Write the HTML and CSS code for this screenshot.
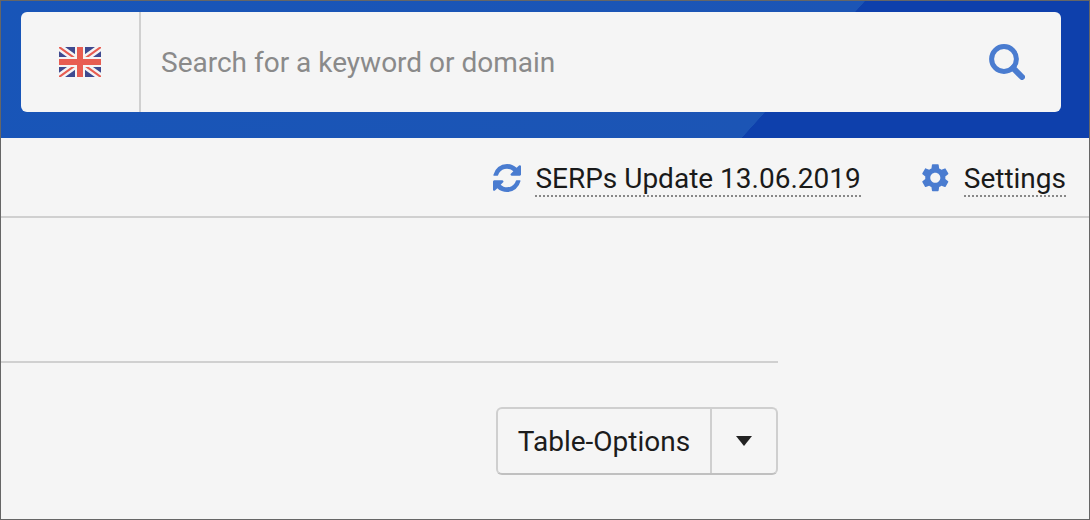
FILE: index.html
```html
<!DOCTYPE html>
<html lang="en">
<head>
<meta charset="utf-8">
<title>SERPs</title>
<link rel="stylesheet" href="styles.css">
</head>
<body>
<div class="frame">
  <header class="hero">
    <div class="searchbox">
      <div class="country">
        <svg class="flag" viewBox="0 0 42 30" width="42" height="30" aria-hidden="true">
          <rect width="42" height="30" rx="1.5" fill="#3f4a90"/>
          <path d="M0 0L42 30M42 0L0 30" stroke="#f5f5f5" stroke-width="7"/>
          <path d="M0 0L42 30M42 0L0 30" stroke="#e85d52" stroke-width="2.2"/>
          <path d="M21 0V30M0 15H42" stroke="#f5f5f5" stroke-width="10"/>
          <path d="M21 0V30M0 15H42" stroke="#e85d52" stroke-width="6"/>
        </svg>
      </div>
      <div class="query">Search for a keyword or domain</div>
      <svg class="search-icon" viewBox="0 0 36 36" width="36" height="36" aria-hidden="true">
        <circle cx="15" cy="15" r="12.4" fill="none" stroke="#4a7cd0" stroke-width="5"/>
        <path d="M24 24L33 33" stroke="#4a7cd0" stroke-width="6" stroke-linecap="round"/>
      </svg>
    </div>
  </header>
  <div class="toolbar">
    <a class="tool">
      <svg class="tool-icon" viewBox="0 0 1536 1536" width="28" height="28" aria-hidden="true">
        <path fill="#4a7cd0" d="M1511 928q0 5-1 7-64 268-268 434.500T764 1536q-146 0-282.500-55T238 1324l-129 129q-19 19-45 19t-45-19-19-45V960q0-26 19-45t45-19h448q26 0 45 19t19 45-19 45L420 1142q71 66 161 102t187 36q134 0 250-65t186-179q11-17 53-117 8-23 30-23h192q13 0 22.500 9.500t9.500 22.500zm25-800v448q0 26-19 45t-45 19h-448q-26 0-45-19t-19-45 19-45l138-138Q969 256 768 256q-134 0-250 65T332 500q-11 17-53 117-8 23-30 23H50q-13 0-22.500-9.500T18 608v-7q65-268 270-434.500T768 0q146 0 284 55.500T1297 212l130-129q19-19 45-19t45 19 19 45z"/>
      </svg>
      <span class="tool-label">SERPs Update 13.06.2019</span>
    </a>
    <a class="tool">
      <svg class="tool-icon" viewBox="2.5 2.2 20 20" width="28" height="28" aria-hidden="true">
        <path fill="#4a7cd0" d="M19.14 12.94c.04-.3.06-.61.06-.94 0-.32-.02-.64-.07-.94l2.03-1.58a.49.49 0 0 0 .12-.61l-1.92-3.32a.488.488 0 0 0-.59-.22l-2.39.96c-.5-.38-1.03-.7-1.62-.94l-.36-2.54a.484.484 0 0 0-.48-.41h-3.84c-.24 0-.43.17-.47.41l-.36 2.54c-.59.24-1.13.57-1.62.94l-2.39-.96c-.22-.08-.47 0-.59.22L2.74 8.87c-.12.21-.08.47.12.61l2.03 1.58c-.05.3-.09.63-.09.94s.02.64.07.94l-2.03 1.58a.49.49 0 0 0-.12.61l1.92 3.32c.12.22.37.29.59.22l2.39-.96c.5.38 1.03.7 1.62.94l.36 2.54c.05.24.24.41.48.41h3.84c.24 0 .44-.17.47-.41l.36-2.54c.59-.24 1.13-.56 1.62-.94l2.39.96c.22.08.47 0 .59-.22l1.92-3.32c.12-.22.07-.47-.12-.61l-2.01-1.58zM12 15.6c-1.98 0-3.6-1.62-3.6-3.6s1.62-3.6 3.6-3.6 3.6 1.62 3.6 3.6-1.62 3.6-3.6 3.6z"/>
      </svg>
      <span class="tool-label">Settings</span>
    </a>
  </div>
  <main class="content">
    <div class="column">
      <hr class="rule">
      <div class="actions">
        <div class="split">
          <button class="split-main">Table-Options</button>
          <button class="split-caret" aria-label="Open"><span class="caret"></span></button>
        </div>
      </div>
    </div>
  </main>
</div>
</body>
</html>
```

FILE: styles.css
```css
* { box-sizing: border-box; }
html, body { margin: 0; height: 100%; }
body { font-family: Roboto, "Liberation Sans", sans-serif; background: #f5f5f5; color: #1c1c1c; }
.frame { width: 1090px; height: 520px; border: 1px solid #666; background: #f5f5f5; overflow: hidden; }
.hero {
  height: 137px;
  padding: 11px 28px 0 20px;
  background: linear-gradient(132deg, #1855b8 0, #1c55b5 71.3%, #0e40ac 71.35%, #0e40ac 100%);
}
.searchbox { height: 100px; background: #f5f5f5; border-radius: 6px; display: flex; align-items: center; }
.country { width: 120px; height: 100%; border-right: 2px solid #d0d0d0; display: flex; align-items: center; justify-content: center; }
.flag { display: block; }
.query { flex: 1; padding: 1px 0 0 20px; font-size: 28px; color: #8a8a8a; }
.search-icon { margin-right: 36px; }
.toolbar { height: 80px; border-bottom: 2px solid #d0d0d0; display: flex; justify-content: flex-end; align-items: center; padding: 6px 23px 0 0; gap: 61px; }
.tool { display: flex; align-items: center; gap: 14px; }
.tool-icon { display: block; margin-top: -4px; }
.tool-label { font-size: 28px; line-height: 32px; border-bottom: 2px dotted #888; color: #1a1a1a; }
.content { width: 777px; }
.rule { margin: 143px 0 0; border: 0; border-top: 2px solid #d0d0d0; }
.actions { display: flex; justify-content: flex-end; margin-top: 44px; }
.split { display: flex; height: 68px; border: 2px solid #cfcfcf; border-bottom-color: #c0c0c0; border-radius: 6px; }
.split button { background: none; border: 0; font: inherit; font-size: 28px; color: #1c1c1c; padding: 0; }
.split-main { width: 212px; }
.split-caret { width: 66px; border-left: 2px solid #cfcfcf !important; display: flex; align-items: center; justify-content: center; }
.caret { width: 0; height: 0; border-left: 8.5px solid transparent; border-right: 8.5px solid transparent; border-top: 10px solid #222; }
```
